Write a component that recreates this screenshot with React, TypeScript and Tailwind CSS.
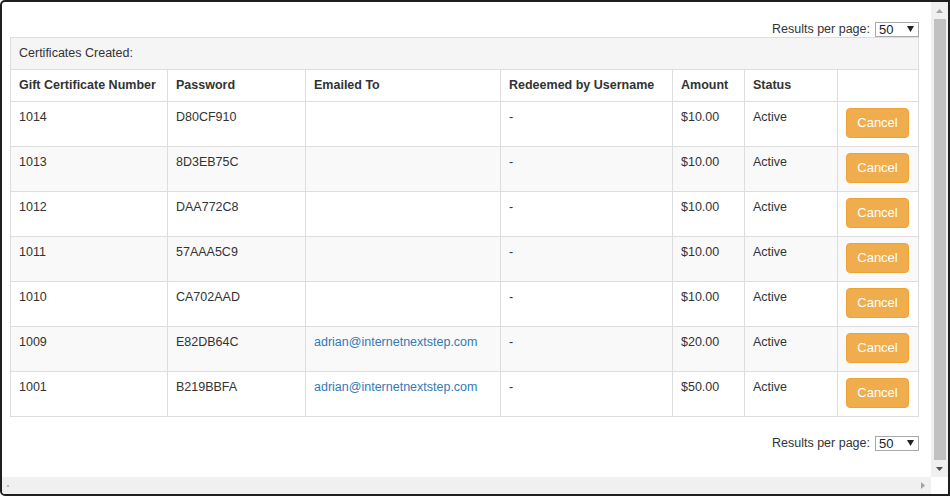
import React from "react";

type Cert = {
  id: string;
  password: string;
  email: string;
  amount: string;
};

const certs: Cert[] = [
  { id: "1014", password: "D80CF910", email: "", amount: "$10.00" },
  { id: "1013", password: "8D3EB75C", email: "", amount: "$10.00" },
  { id: "1012", password: "DAA772C8", email: "", amount: "$10.00" },
  { id: "1011", password: "57AAA5C9", email: "", amount: "$10.00" },
  { id: "1010", password: "CA702AAD", email: "", amount: "$10.00" },
  { id: "1009", password: "E82DB64C", email: "adrian@internetnextstep.com", amount: "$20.00" },
  { id: "1001", password: "B219BBFA", email: "adrian@internetnextstep.com", amount: "$50.00" },
];

function ResultsPerPage() {
  return (
    <div className="flex h-[16px] items-center justify-end gap-[5px] text-[12.5px] text-[#333]">
      <span>Results per page:</span>
      <div className="flex h-[15px] w-[44px] items-center justify-between border border-[#a9a9a9] bg-white pl-[3px] pr-[4px] text-[13px] leading-none text-[#222]">
        <span>50</span>
        <svg width="7" height="6" viewBox="0 0 7 6">
          <path d="M0 0h7L3.5 6z" fill="#222" />
        </svg>
      </div>
    </div>
  );
}

function Arrow({ dir, color }: { dir: "up" | "down" | "left" | "right"; color: string }) {
  const d = {
    up: "M0 4h7L3.5 0z",
    down: "M0 0h7L3.5 4z",
    left: "M4 0v7L0 3.5z",
    right: "M0 0v7l4-3.5z",
  }[dir];
  const vertical = dir === "up" || dir === "down";
  return (
    <svg width={vertical ? 7 : 4} height={vertical ? 4 : 7} viewBox={vertical ? "0 0 7 4" : "0 0 4 7"}>
      <path d={d} fill={color} />
    </svg>
  );
}

export default function App() {
  const cell = "whitespace-nowrap border border-[#ddd] px-2 pt-[6px] align-top";
  return (
    <div className="h-[496px] w-[950px] bg-white" style={{ fontFamily: '"Liberation Sans", Arial, sans-serif' }}>
      <div className="flex h-full w-full flex-col overflow-hidden rounded-l-[5px] border-2 border-[#1f1f1f]">
        <div className="flex min-h-0 flex-1">
          {/* Page content */}
          <div className="flex-1 pl-2 pr-[12px] pt-[19px]">
            <ResultsPerPage />
            <table className="w-[909px] table-fixed border-collapse text-[12.5px] leading-[18px] text-[#333]">
              <colgroup>
                <col className="w-[157px]" />
                <col className="w-[138px]" />
                <col className="w-[195px]" />
                <col className="w-[172px]" />
                <col className="w-[72px]" />
                <col className="w-[93px]" />
                <col />
              </colgroup>
              <tbody>
                <tr className="h-[32px] bg-[#f5f5f5]">
                  <td colSpan={7} className={cell}>
                    Certificates Created:
                  </td>
                </tr>
                <tr className="h-[32px] bg-white font-bold">
                  <td className={cell}>Gift Certificate Number</td>
                  <td className={cell}>Password</td>
                  <td className={cell}>Emailed To</td>
                  <td className={cell}>Redeemed by Username</td>
                  <td className={cell}>Amount</td>
                  <td className={cell}>Status</td>
                  <td className={cell}></td>
                </tr>
                {certs.map((c, i) => (
                  <tr key={c.id} className={`h-[45px] ${i % 2 === 1 ? "bg-[#f9f9f9]" : "bg-white"}`}>
                    <td className={cell}>{c.id}</td>
                    <td className={cell}>{c.password}</td>
                    <td className={cell}>
                      {c.email && <a className="text-[#337ab7]">{c.email}</a>}
                    </td>
                    <td className={cell}>-</td>
                    <td className={cell}>{c.amount}</td>
                    <td className={cell}>Active</td>
                    <td className="border border-[#ddd] px-2 pt-[6px] align-top">
                      <button className="h-[30px] w-[63px] rounded-[4px] border border-[#eea236] bg-[#f0ad4e] text-[13px] text-white">
                        Cancel
                      </button>
                    </td>
                  </tr>
                ))}
              </tbody>
            </table>
            <div className="mt-[18px]">
              <ResultsPerPage />
            </div>
          </div>
          {/* Vertical scrollbar */}
          <div className="flex w-[17px] flex-col items-center bg-[#f0f0f0]">
            <div className="flex h-[17px] items-center justify-center">
              <Arrow dir="up" color="#a3a3a3" />
            </div>
            <div className="w-[12px] flex-1 bg-[#c1c1c1]" />
            <div className="flex h-[17px] items-center justify-center">
              <Arrow dir="down" color="#505050" />
            </div>
          </div>
        </div>
        {/* Horizontal scrollbar */}
        <div className="flex h-[17px]">
          <div className="flex flex-1 items-center justify-between bg-[#f0f0f0] pl-[5px] pr-[6px]">
            <div className="h-[2px] w-[2px] bg-[#bbb]" />
            <Arrow dir="right" color="#a3a3a3" />
          </div>
          <div className="w-[17px] bg-white" />
        </div>
      </div>
    </div>
  );
}
